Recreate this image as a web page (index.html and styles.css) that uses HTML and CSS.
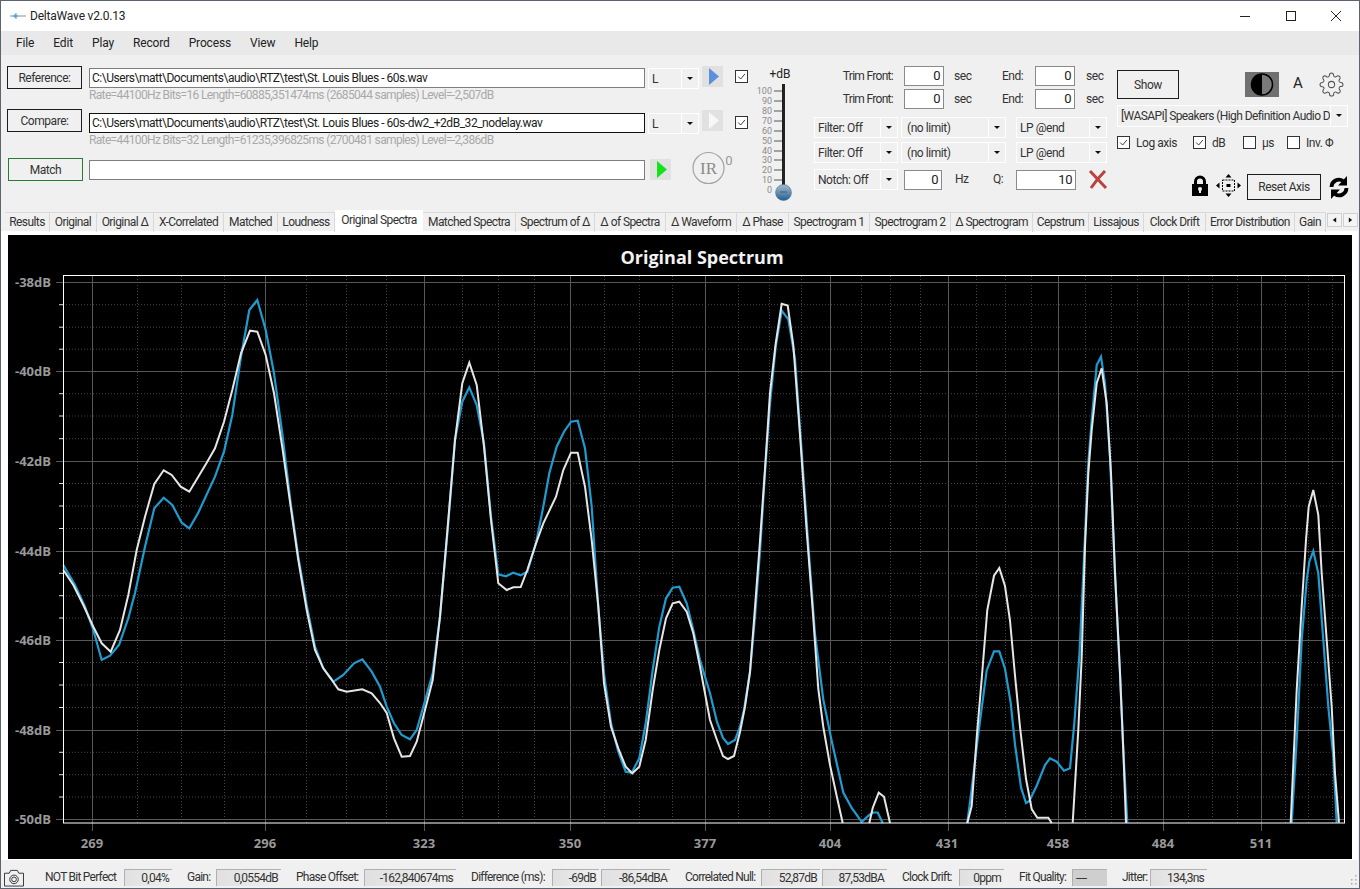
FILE: index.html
```html
<!DOCTYPE html>
<html lang="en">
<head>
<meta charset="utf-8">
<title>DeltaWave v2.0.13</title>
<link rel="stylesheet" href="styles.css">
</head>
<body>
<div class="window">
  <header class="titlebar">
    <svg class="app-icon" viewBox="0 0 16 8"><path class="app-line" d="M0 4H16"/><path class="app-wave" d="M3 4H8M5 2V6M6 1V7"/></svg>
    <span class="app-title">DeltaWave v2.0.13</span>
    <div class="win-buttons">
      <svg viewBox="0 0 10 10"><path d="M0 5.5H10"/></svg>
      <svg viewBox="0 0 10 10"><rect x=".5" y=".5" width="9" height="9"/></svg>
      <svg viewBox="0 0 10 10"><path d="M0 0L10 10M10 0L0 10"/></svg>
    </div>
  </header>
  <nav class="menubar">
    <span>File</span><span>Edit</span><span>Play</span><span>Record</span><span>Process</span><span>View</span><span>Help</span>
  </nav>

  <section class="controls">
    <div class="files">
      <div class="file-row">
        <button class="btn btn-file">Reference:</button>
        <div class="field field-path field-gray">C:\Users\matt\Documents\audio\RTZ\test\St. Louis Blues - 60s.wav</div>
        <div class="combo combo-ch"><span class="combo-text">L</span><span class="combo-arrow"></span></div>
        <div class="play"><svg viewBox="0 0 21 21"><path class="tri-blue" d="M7 2L17 10.5L7 19Z"/></svg></div>
        <span class="chk chk-row1"><svg viewBox="0 0 13 13"><path d="M2.5 6.5L5.5 9.5L10.5 3.5"/></svg></span>
      </div>
      <div class="note">Rate=44100Hz Bits=16 Length=60885,351474ms (2685044 samples) Level=-2,507dB</div>
      <div class="file-row file-row-2">
        <button class="btn btn-file">Compare:</button>
        <div class="field field-path field-dark">C:\Users\matt\Documents\audio\RTZ\test\St. Louis Blues - 60s-dw2_+2dB_32_nodelay.wav</div>
        <div class="combo combo-ch"><span class="combo-text">L</span><span class="combo-arrow"></span></div>
        <div class="play"><svg viewBox="0 0 21 21"><path class="tri-white" d="M7 2L17 10.5L7 19Z"/></svg></div>
        <span class="chk chk-row2"><svg viewBox="0 0 13 13"><path d="M2.5 6.5L5.5 9.5L10.5 3.5"/></svg></span>
      </div>
      <div class="note note-2">Rate=44100Hz Bits=32 Length=61235,396825ms (2700481 samples) Level=-2,386dB</div>
      <div class="file-row file-row-3">
        <button class="btn btn-match">Match</button>
        <div class="field field-match field-gray"></div>
        <div class="play play-match"><svg viewBox="0 0 21 21"><path class="tri-green" d="M7 2L17 10.5L7 19Z"/></svg></div>
        <svg class="ir" viewBox="0 0 42 34"><circle cx="16.5" cy="17" r="15.5"/><text class="ir-text" x="16.5" y="23">IR</text><text class="ir-zero" x="37" y="14">0</text></svg>
      </div>
    </div>

    <svg class="gain" viewBox="757 66 43 136">
      <defs>
        <linearGradient id="knob" x1="0" y1="0" x2="0" y2="1">
          <stop offset="0" stop-color="#a9b9c6"/><stop offset=".45" stop-color="#6f93b3"/><stop offset="1" stop-color="#1f6192"/>
        </linearGradient>
      </defs>
      <text class="gain-title" x="780" y="78">+dB</text>
      <rect class="gain-track" x="782" y="84" width="3" height="106"/>
      <path class="gain-ticks" d="M774 91H782M774 101H782M774 111H782M774 121H782M774 131H782M774 141H782M774 151H782M774 160H782M774 170H782M774 180H782"/>
      <text class="gain-num" x="772" y="94">100</text><text class="gain-num" x="772" y="104">90</text><text class="gain-num" x="772" y="114">80</text><text class="gain-num" x="772" y="124">70</text><text class="gain-num" x="772" y="134">60</text><text class="gain-num" x="772" y="144">50</text><text class="gain-num" x="772" y="154">40</text><text class="gain-num" x="772" y="163">30</text><text class="gain-num" x="772" y="173">20</text><text class="gain-num" x="772" y="183">10</text><text class="gain-num" x="772" y="193">0</text>
      <circle class="gain-knob" cx="783.5" cy="192.5" r="8"/>
      <path class="gain-mark" d="M780 192H787"/>
    </svg>

    <div class="trim">
      <div class="trim-row">
        <span class="t-label">Trim Front:</span><div class="field field-num">0</div><span class="t-unit">sec</span>
        <span class="t-end">End:</span><div class="field field-num">0</div><span class="t-unit t-unit-end">sec</span>
      </div>
      <div class="trim-row trim-row-2">
        <span class="t-label">Trim Front:</span><div class="field field-num">0</div><span class="t-unit">sec</span>
        <span class="t-end">End:</span><div class="field field-num">0</div><span class="t-unit t-unit-end">sec</span>
      </div>
      <div class="filter-row filter-row-1">
        <div class="combo combo-a"><span class="combo-text">Filter: Off</span><span class="combo-arrow"></span></div>
        <div class="combo combo-b"><span class="combo-text">(no limit)</span><span class="combo-arrow"></span></div>
        <div class="combo combo-c"><span class="combo-text">LP @end</span><span class="combo-arrow"></span></div>
      </div>
      <div class="filter-row filter-row-2">
        <div class="combo combo-a"><span class="combo-text">Filter: Off</span><span class="combo-arrow"></span></div>
        <div class="combo combo-b"><span class="combo-text">(no limit)</span><span class="combo-arrow"></span></div>
        <div class="combo combo-c"><span class="combo-text">LP @end</span><span class="combo-arrow"></span></div>
      </div>
      <div class="notch-row">
        <div class="combo combo-a"><span class="combo-text">Notch: Off</span><span class="combo-arrow"></span></div>
        <div class="field field-hz">0</div><span class="n-hz">Hz</span><span class="n-q">Q:</span>
        <div class="field field-q">10</div>
        <svg class="red-x" viewBox="0 0 20 19"><path d="M2 1L18 18M17 1C12 6 7 12 3 18"/></svg>
      </div>
    </div>

    <div class="side">
      <div class="side-top">
        <button class="btn btn-show">Show</button>
        <div class="contrast"><svg viewBox="0 0 34 25"><circle cx="17" cy="12.5" r="10.5"/><path d="M17 2A10.5 10.5 0 0 0 17 23Z"/></svg></div>
        <span class="font-a">A</span>
        <svg class="gear" viewBox="0 0 24 24"><circle cx="12" cy="12" r="3"/><path d="M19.4 15a1.65 1.65 0 0 0 .33 1.82l.06.06a2 2 0 0 1 0 2.83 2 2 0 0 1-2.83 0l-.06-.06a1.65 1.65 0 0 0-1.82-.33 1.65 1.65 0 0 0-1 1.51V21a2 2 0 0 1-2 2 2 2 0 0 1-2-2v-.09A1.65 1.65 0 0 0 9 19.4a1.65 1.65 0 0 0-1.82.33l-.06.06a2 2 0 0 1-2.83 0 2 2 0 0 1 0-2.83l.06-.06a1.65 1.65 0 0 0 .33-1.82 1.65 1.65 0 0 0-1.51-1H3a2 2 0 0 1-2-2 2 2 0 0 1 2-2h.09A1.65 1.65 0 0 0 4.6 9a1.65 1.65 0 0 0-.33-1.82l-.06-.06a2 2 0 0 1 0-2.83 2 2 0 0 1 2.83 0l.06.06a1.65 1.65 0 0 0 1.82.33H9a1.65 1.65 0 0 0 1-1.51V3a2 2 0 0 1 2-2 2 2 0 0 1 2 2v.09a1.65 1.65 0 0 0 1 1.51 1.65 1.65 0 0 0 1.82-.33l.06-.06a2 2 0 0 1 2.83 0 2 2 0 0 1 0 2.83l-.06.06a1.65 1.65 0 0 0-.33 1.82V9a1.65 1.65 0 0 0 1.51 1H21a2 2 0 0 1 2 2 2 2 0 0 1-2 2h-.09a1.65 1.65 0 0 0-1.51 1z"/></svg>
      </div>
      <div class="combo combo-dev"><span class="combo-text">[WASAPI] Speakers (High Definition Audio D</span><span class="combo-arrow"></span></div>
      <div class="checks">
        <span class="chk"><svg viewBox="0 0 13 13"><path d="M2.5 6.5L5.5 9.5L10.5 3.5"/></svg></span><span class="chk-label cl-log">Log axis</span>
        <span class="chk"><svg viewBox="0 0 13 13"><path d="M2.5 6.5L5.5 9.5L10.5 3.5"/></svg></span><span class="chk-label cl-db">dB</span>
        <span class="chk"></span><span class="chk-label cl-us">µs</span>
        <span class="chk"></span><span class="chk-label">Inv. Φ</span>
      </div>
      <div class="side-bottom">
        <svg class="lock" viewBox="0 0 18 21"><path d="M1 9H17V21H1ZM3 9V6.5A6 6 0 0 1 15 6.5V9H12V6.5A3 3 0 0 0 6 6.5V9Z"/><circle class="lock-hole" cx="9" cy="14" r="2"/><rect class="lock-hole" x="8" y="14" width="2" height="4"/></svg>
        <svg class="move" viewBox="0 0 25 23"><path class="move-arrows" d="M12.5 0L15.5 3.5H9.5ZM12.5 23L9.5 19.500H15.500ZM0 11.500L3.500 8.500V14.500ZM25 11.500L21.500 14.500V8.500Z"/><rect class="move-box" x="6.500" y="6" width="12" height="11"/><rect class="move-dot" x="10.500" y="10" width="4" height="3"/></svg>
        <button class="btn btn-reset">Reset Axis</button>
        <svg class="sync" viewBox="0 0 20 23"><path class="sync-arc" d="M2.500 11A7.500 7.500 0 0 1 14 4.800M17.500 12A7.500 7.500 0 0 1 6 18.200"/><path class="sync-head" d="M18 0V9.500H9ZM2 23V13.500H11Z"/></svg>
      </div>
    </div>
  </section>

  <div class="tabs">
    <span class="tab">Results</span><span class="tab">Original</span><span class="tab">Original Δ</span><span class="tab">X-Correlated</span><span class="tab">Matched</span><span class="tab">Loudness</span><span class="tab tab-active">Original Spectra</span><span class="tab">Matched Spectra</span><span class="tab">Spectrum of Δ</span><span class="tab">Δ of Spectra</span><span class="tab">Δ Waveform</span><span class="tab">Δ Phase</span><span class="tab">Spectrogram 1</span><span class="tab">Spectrogram 2</span><span class="tab">Δ Spectrogram</span><span class="tab">Cepstrum</span><span class="tab">Lissajous</span><span class="tab">Clock Drift</span><span class="tab">Error Distribution</span><span class="tab">Gain</span>
    <div class="tab-scroll">
      <span class="scroll-btn"><svg viewBox="0 0 15 14"><path d="M9.500 4V10L5.500 7Z"/></svg></span>
      <span class="scroll-btn"><svg viewBox="0 0 15 14"><path d="M5.500 4V10L9.500 7Z"/></svg></span>
    </div>
  </div>

  <main class="panel">
    <svg class="chart" viewBox="8 235 1344 624">
      <text class="chart-title" x="702" y="264">Original Spectrum</text>
      <path class="grid-minor" d="M63 304.700H1344M63 327.200H1344M63 349.200H1344M63 393.700H1344M63 416H1344M63 438.700H1344M63 483.500H1344M63 506H1344M63 528.500H1344M63 573.300H1344M63 595.700H1344M63 618H1344M63 662.500H1344M63 685H1344M63 707.500H1344M63 752.300H1344M63 774.700H1344M63 797H1344"/>
      <path class="grid-minor" d="M137.500 276V823M181.500 276V823M224.500 276V823M306.500 276V823M346.500 276V823M386.500 276V823M462.500 276V823M498.500 276V823M534.500 276V823M604.500 276V823M639.500 276V823M672.500 276V823M738.500 276V823M769.500 276V823M801.500 276V823M861.500 276V823M890.500 276V823M920.500 276V823M976.500 276V823M1005.500 276V823M1031.500 276V823M1085.500 276V823M1111.500 276V823M1137.500 276V823M1188.500 276V823M1212.500 276V823M1237.500 276V823M1285.500 276V823M1308.500 276V823M1332.500 276V823"/>
      <path class="grid-major" d="M56 282.500H1344M56 371.500H1344M56 461.500H1344M56 551.500H1344M56 640.500H1344M56 730.500H1344M56 819.500H1344M92.500 276V831M265.500 276V831M424.500 276V831M570.500 276V831M705.500 276V831M830.500 276V831M948.500 276V831M1058.500 276V831M1163.500 276V831M1261.500 276V831"/>
      <path class="tick-minor" d="M59 304.700H63M59 327.200H63M59 349.200H63M59 393.700H63M59 416H63M59 438.700H63M59 483.500H63M59 506H63M59 528.500H63M59 573.300H63M59 595.700H63M59 618H63M59 662.500H63M59 685H63M59 707.500H63M59 752.300H63M59 774.700H63M59 797H63"/>
      <polyline class="line-blue" points="63.300,565 75,585 85,606.700 93.300,630 101.700,660 110,655.700 119,645 128.300,618.300 135,593 145,546.700 154.300,508.300 163.700,497.700 172.300,505 181.700,522.700 189.300,528.300 198,513.300 215,476.700 224,451.700 232.300,415 241,356.700 249.300,310 257.300,300 265.700,330 274,373.300 282.700,436.700 290.700,503.300 298.300,556.700 306.700,605 315,646.700 323.300,668.300 333.300,681.700 343.300,675 354,663.300 362.300,659.300 371.700,671.700 380,686.700 386.700,706.700 394,723.300 401.700,735 410,739.300 416.700,730 423.300,706.700 432.700,673.300 440,616.700 447.700,530 455,440 462.300,401.700 469.300,387.300 476.700,405 484,443.300 491,516.700 498.300,574.300 506,576.300 513.300,572.700 520.700,575.300 527.300,571.700 536,543.300 543.300,506.700 549.300,473.300 556.700,446.700 564,431.700 571,421.700 577.700,420.700 585,448.300 591.700,506.700 598.300,606.700 604,673.300 611,723.300 618.300,751.700 625.700,771.700 631.700,772.700 639.300,758.300 645.700,723.300 652.700,670 659.300,626.700 666,598.300 672.700,587.700 679.300,586.700 686.700,603.300 693.300,630 700,660 710,693.300 717,722 723,738 728,744 735,740 740,727 744,710 750,672 755,617 760,551.600 765,472.400 770,403.600 775.700,346.800 781.700,310.700 788.300,319.300 795,358.800 801.700,451.800 808.300,544.700 815,634 823.300,699.600 831.700,741 843.300,792.600 851.700,808 861.700,821.800 869.300,815 873.300,812.500 877.700,812.500 882.700,823"/>
      <polyline class="line-blue" points="967.300,823 971.700,789 978.300,734 986.700,670.400 994,651.400 999.300,651.400 1005,668.700 1010.700,703 1015,744.400 1021,787.400 1026,803 1029.300,801 1036.700,785.700 1045,765 1050,758.300 1056.700,761.700 1064,770.700 1070,768.300 1074.300,723.300 1079.300,656.700 1083.300,573.300 1088.300,463.300 1091.700,420 1096.700,365 1101,356.700 1105,383.300 1110,456.700 1115,573.300 1120,673.300 1123.300,750 1127.300,822.700"/>
      <polyline class="line-blue" points="1291.700,822.700 1296.700,740 1301.700,640 1306.700,580 1309.300,561.700 1313.300,551 1318.300,573.300 1323.300,640 1328.300,706.700 1333.300,756.700 1336.700,822.700"/>
      <polyline class="line-white" points="63.300,570 73.300,585 83.300,605 93.300,626.700 101.700,643.300 110.700,651.700 120,630 128.300,595 136.700,550 145,516.700 154.300,484 163.700,470.300 171.700,475 180.700,486.700 189.300,491.700 198.300,476.700 206.700,462.700 215,448.300 224,421.700 232.300,390 241,353.300 250,330.700 257.300,331.700 265.700,355 274,393.300 282.700,450 290.700,506.700 298.300,560 306.700,610 315,650 323.300,668.300 330.700,678.300 338.300,689.300 346.700,691.700 362.300,689.300 371.700,693.300 380,703 386.700,713 394,738.300 401.700,756.700 410,756 416.700,741.700 425,710 432.700,680 440,616.700 447.700,526.700 455,440 462.300,383.300 469.300,362.700 476.700,385 484,446.700 491,520 498.300,583.300 506.700,590 513.300,587.300 520.700,587 527.300,570 536,543.300 543.300,523.300 556,496.700 563.300,470 571,452.700 577.700,452.700 585,486.700 591.700,540 598.300,606.700 604,683.300 611,726.700 618.300,748.300 625.700,766.700 632.300,773.300 639.300,766.700 645.700,740 652.700,690 659.300,650 666,618.300 672.700,603.300 679.300,601.700 686.700,611.700 693.300,633.300 700,666.700 710,720 717,740 723,756 728,759 734,756 740,732 745,706.500 750,672 754,620.500 760,541 765,469 770,393 775.700,343.400 781.700,303.800 787.700,305.500 793.300,345 800,434.600 806.700,531 812.700,610 818.300,689 823.300,727 830,765 836.700,796 842.700,823"/>
      <polyline class="line-white" points="869.300,823 872.700,808 878.700,792.600 884,796.700 890,823"/>
      <polyline class="line-white" points="967.300,823 971.700,806 976.700,737.500 981.700,679 987.300,610 994,575.700 999.300,568 1005,586 1010,620.500 1015,675.500 1020,727 1026,778.800 1031.700,809 1037.300,817.700 1048.300,817.700 1051.700,823"/>
      <polyline class="line-white" points="1072.700,822.700 1078.300,730 1081.700,656.700 1085,546.700 1088.300,473.300 1091.700,430 1096.700,383.300 1101.700,368.300 1106.700,403.300 1111,473.300 1115,573.300 1120,673.300 1123.300,750 1126,822.700"/>
      <polyline class="line-white" points="1290.700,822.700 1296.700,690 1301.700,606.700 1306,540 1308.700,506.700 1313.300,490 1318.300,515 1321.700,573.300 1326.700,640 1331.700,706.700 1335,773.300 1339,822.700"/>
      <rect class="plot-frame" x="63.500" y="275.500" width="1281" height="547.500"/>
      <text class="y-label" x="51" y="287">-38dB</text><text class="y-label" x="51" y="376">-40dB</text><text class="y-label" x="51" y="466">-42dB</text><text class="y-label" x="51" y="556">-44dB</text><text class="y-label" x="51" y="645">-46dB</text><text class="y-label" x="51" y="735">-48dB</text><text class="y-label" x="51" y="824">-50dB</text>
      <text class="x-label" x="92" y="848">269</text><text class="x-label" x="265" y="848">296</text><text class="x-label" x="424" y="848">323</text><text class="x-label" x="570" y="848">350</text><text class="x-label" x="705" y="848">377</text><text class="x-label" x="830" y="848">404</text><text class="x-label" x="947" y="848">431</text><text class="x-label" x="1058" y="848">458</text><text class="x-label" x="1163" y="848">484</text><text class="x-label" x="1261" y="848">511</text>
    </svg>
  </main>

  <footer class="status">
    <svg class="camera" viewBox="0 0 22 20"><path d="M1 5.500H6L7.500 2.500H14.500L16 5.500H21V19H1Z"/><circle cx="11" cy="12" r="4.500"/><circle cx="11" cy="12" r="2.500"/></svg>
    <span class="s-label s-first">NOT Bit Perfect</span><span class="s-box">0,04%</span>
    <span class="s-label">Gain:</span><span class="s-box">0,0554dB</span>
    <span class="s-label">Phase Offset:</span><span class="s-box">-162,840674ms</span>
    <span class="s-label">Difference (ms):</span><span class="s-box">-69dB</span><span class="s-box s-box-pair">-86,54dBA</span>
    <span class="s-label">Correlated Null:</span><span class="s-box">52,87dB</span><span class="s-box s-box-pair">87,53dBA</span>
    <span class="s-label">Clock Drift:</span><span class="s-box">0ppm</span>
    <span class="s-label">Fit Quality:</span><span class="s-box s-box-dark">----</span>
    <span class="s-label">Jitter:</span><span class="s-box">134,3ns</span>
    <svg class="grip" viewBox="0 0 9 12"><path d="M6 1h1.500v1.500H6zM6 5h1.500v1.500H6zM2 5h1.500v1.500H2zM6 9h1.500v1.500H6zM2 9h1.500v1.500H2z"/></svg>
  </footer>
</div>
</body>
</html>
```
FILE: styles.css
```css
* { box-sizing: border-box; }
html, body { margin: 0; padding: 0; }
body { width: 1360px; height: 889px; overflow: hidden; background: #f0f0f0; font-family: Roboto, "Open Sans", sans-serif; font-size: 12px; letter-spacing: -.45px; color: #333; }
button { font: inherit; letter-spacing: inherit; color: inherit; padding: 0; }
svg { display: block; flex: none; letter-spacing: 0; }

.window { width: 1360px; height: 889px; border: 1px solid #5c6470; background: #f0f0f0; display: flex; flex-direction: column; overflow: hidden; }

.titlebar { height: 30px; background: #fff; display: flex; align-items: center; flex: none; padding-left: 9px; }
.app-icon { width: 16px; height: 8px; }
.app-line { stroke: #8a8f96; stroke-width: 1; fill: none; }
.app-wave { stroke: #3f9ee0; stroke-width: 1; fill: none; }
.app-title { margin-left: 4px; font-size: 12px; letter-spacing: -.2px; color: #222; }
.win-buttons { margin-left: auto; display: flex; gap: 35.5px; padding-right: 18px; }
.win-buttons svg { width: 10px; height: 10px; fill: none; stroke: #222; stroke-width: 1; overflow: visible; }

.menubar { height: 24px; flex: none; background: #e9e9e9; display: flex; align-items: center; gap: 19px; padding-left: 15px; font-size: 12px; letter-spacing: -.15px; color: #222; }

.controls { height: 156px; flex: none; display: flex; }
.files { width: 756px; padding: 11px 0 0 6px; flex: none; }
.file-row { display: flex; align-items: flex-start; height: 23px; }
.file-row-2 { margin-top: 7px; }
.file-row-3 { margin-top: 11px; padding-left: 1px; }

.btn { background: #f0f0f0; border: 1px solid #1c1c1c; display: block; text-align: center; flex: none; }
.btn-file { width: 75px; height: 23px; }
.btn-match { width: 75px; height: 23px; border-color: #2b7a3b; }
.btn-show { width: 62px; height: 29px; }
.btn-reset { width: 74px; height: 26px; }

.field { background: #fff; border: 1px solid #8a8a8a; flex: none; height: 20px; line-height: 18px; color: #222; white-space: nowrap; overflow: hidden; }
.field-gray { border-color: #7e7e7e; }
.field-dark { border-color: #111; }
.field-path { width: 556px; margin: 2px 0 0 7px; padding-left: 2px; font-size: 12px; letter-spacing: -.47px; }
.file-row-2 .field-path { margin-top: 4px; }
.field-match { width: 556px; margin: 2px 0 0 6px; }
.field-num { width: 40px; text-align: right; padding-right: 3px; font-size: 13px; }
.field-hz { width: 38px; margin: 1px 0 0 6px; text-align: right; padding-right: 3px; font-size: 13px; }
.field-q { width: 60px; margin-top: 1px; text-align: right; padding-right: 3px; font-size: 13px; }

.note { margin-left: 82px; height: 13px; line-height: 13px; color: #a9a9a9; font-size: 12px; letter-spacing: -.65px; white-space: nowrap; }
.note-2 { margin-top: 2px; }

.combo { display: flex; border: 1px solid #fff; height: 21px; flex: none; background: #f0f0f0; }
.combo-text { flex: 1; padding-left: 3px; line-height: 20px; white-space: nowrap; overflow: hidden; }
.combo-arrow { width: 17px; flex: none; border-left: 1px solid #fff; position: relative; }
.combo-arrow::after { content: ""; position: absolute; left: 5px; top: 8px; border: 3px solid transparent; border-top: 3px solid #111; border-bottom: 0; }
.combo-ch { width: 51px; margin: 2px 0 0 3px; }
.file-row-2 .combo-ch { margin-top: 4px; }
.combo-a { width: 84px; }
.combo-b { width: 105px; margin-left: 3px; }
.combo-b .combo-text { padding-left: 5px; }
.combo-c { width: 91px; margin-left: 10px; }
.combo-dev { width: 231px; height: 22px; margin-top: 6px; letter-spacing: -.58px; }
.combo-dev .combo-arrow { width: 17px; }

.play { width: 21px; height: 21px; background: #e1e1e1; margin-left: 3px; flex: none; }
.play svg { width: 21px; height: 21px; }
.file-row-2 .play { margin-top: 1px; }
.play-match { margin: 1px 0 0 5px; }
.tri-blue { fill: #5c8fdc; }
.tri-white { fill: #f7f7f7; }
.tri-green { fill: #16e21c; }

.chk { width: 13px; height: 13px; border: 1px solid #333; background: #fff; flex: none; display: block; }
.chk svg { width: 11px; height: 11px; fill: none; stroke: #333; stroke-width: 1.1; }
.chk-row1 { margin: 4px 0 0 12px; }
.chk-row2 { margin: 7px 0 0 12px; }

.ir { width: 42px; height: 34px; margin: -7px 0 0 21px; fill: none; stroke: none; }
.ir circle { stroke: #a3a3a3; stroke-width: 1.2; }
.ir-text { font-family: "Liberation Serif", serif; font-size: 17px; fill: #8a8a8a; text-anchor: middle; }
.ir-zero { font-family: Roboto, sans-serif; font-size: 13px; fill: #999; text-anchor: middle; }

.gain { width: 43px; height: 136px; margin-top: 11px; flex: none; }
.gain-title { font-size: 12px; fill: #222; text-anchor: middle; }
.gain-track { fill: #222; }
.gain-ticks { stroke: #555; stroke-width: 1; fill: none; }
.gain-num { font-size: 9px; fill: #8c8c8c; text-anchor: end; }
.gain-knob { fill: url(#knob); stroke: #3a6f97; stroke-width: .5; }
.gain-mark { stroke: #3c5f78; stroke-width: 1; }

.trim { width: 296px; margin-left: 14px; padding-top: 11px; flex: none; }
.trim-row { display: flex; height: 20px; line-height: 20px; }
.trim-row-2 { margin-top: 3px; }
.t-label { width: 79px; margin-right: 11px; text-align: right; flex: none; white-space: nowrap; letter-spacing: -.7px; }
.t-unit { width: 58px; padding-left: 10px; flex: none; }
.t-unit-end { width: 30px; padding-left: 11px; }
.t-end { width: 33px; flex: none; }
.filter-row { display: flex; }
.filter-row-1 { margin-top: 8px; }
.filter-row-2 { margin-top: 4px; }
.notch-row { display: flex; margin-top: 6px; line-height: 21px; }
.n-hz { width: 38px; margin-left: 13px; flex: none; }
.n-q { width: 23px; flex: none; }
.red-x { width: 20px; height: 19px; margin: 1px 0 0 12px; fill: none; stroke: #b9423f; stroke-width: 3; }

.side { width: 233px; margin-left: 7px; padding-top: 15px; flex: none; }
.side-top { display: flex; align-items: flex-start; height: 29px; }
.contrast { width: 34px; height: 25px; margin: 2px 0 0 66px; background: #707070; }
.contrast svg { width: 34px; height: 25px; fill: #000; }
.contrast circle { fill: #7a7a7a; stroke: #000; stroke-width: 1.5; }
.font-a { font-size: 15px; letter-spacing: 0; color: #222; margin: 4px 0 0 14px; width: 26px; }
.gear { width: 25px; height: 25px; margin-top: 2px; fill: none; stroke: #555; stroke-width: 1; }
.checks { display: flex; align-items: center; margin-top: 9px; height: 13px; }
.chk-label { white-space: nowrap; margin-left: 6px; }
.cl-log { width: 57px; }
.cl-db { width: 31px; }
.cl-us { width: 25px; }
.side-bottom { display: flex; align-items: flex-start; margin-top: 25px; padding-left: 74px; }
.lock { width: 18px; height: 21px; margin-top: 1px; fill: #000; }
.lock-hole { fill: #f0f0f0; }
.move { width: 25px; height: 23px; margin-left: 7px; }
.move-arrows { fill: #000; }
.move-box { fill: none; stroke: #000; stroke-width: 1; stroke-dasharray: 2 1; }
.move-dot { fill: #000; }
.btn-reset { margin-left: 6px; }
.sync { width: 20px; height: 23px; margin: 2px 0 0 8px; }
.sync-arc { fill: none; stroke: #000; stroke-width: 3.8; }
.sync-head { fill: #000; }

.tabs { height: 20px; flex: none; position: relative; display: grid; padding-left: 4px; letter-spacing: -.58px; grid-template-columns: 45px 47px 57px 70px 54px 57px 88px 93px 79px 71px 71px 52px 81px 81px 82px 56px 55px 62px 89px 31px; }
.tab { text-align: center; white-space: nowrap; line-height: 18px; border: 1px solid #d9d9d9; border-left: 0; border-bottom: 0; height: 20px; margin-top: 1px; color: #333; overflow: hidden; }
.tab-active { background: #fff; height: 22px; margin-top: -1px; line-height: 20px; border: 0; position: relative; z-index: 1; }
.tab-scroll { position: absolute; right: 1px; top: 2px; display: flex; gap: 1px; }
.scroll-btn { width: 15px; height: 14px; border: 1px solid #d0d0d0; background: #f4f4f4; }
.scroll-btn svg { width: 13px; height: 12px; fill: #111; }

.panel { height: 629px; flex: none; background: #fff; margin: 0 1px 0 0; padding: 4px 6px 0 7px; }
.chart { width: 1344px; height: 624px; background: #000; }
.chart-title { font-family: "Open Sans", sans-serif; font-weight: 700; font-size: 18px; fill: #f2f2f2; text-anchor: middle; }
.grid-minor { stroke: #444; stroke-width: 1; stroke-dasharray: 1 2; fill: none; }
.grid-major { stroke: #585858; stroke-width: 1; fill: none; }
.tick-minor { stroke: #ddd; stroke-width: 1; fill: none; }
.line-blue { fill: none; stroke: #1f9bcf; stroke-width: 2.2; }
.line-white { fill: none; stroke: #e6e6e6; stroke-width: 2; }
.plot-frame { fill: none; stroke: #fff; stroke-width: 1; }
.y-label { font-family: "Open Sans", sans-serif; font-weight: 700; font-size: 13px; fill: #999; text-anchor: end; }
.x-label { font-family: "Open Sans", sans-serif; font-weight: 700; font-size: 13px; fill: #999; text-anchor: middle; }

.status { height: 28px; flex: none; display: grid; align-items: start; padding-top: 9px; letter-spacing: -.75px; grid-template-columns: 44px 79px 48px 44px 65px 83px 92px 96px 47px 71px 91px 59px 67px 72px 45px 68px 35px 43px 57px; position: relative; }
.camera { position: absolute; left: 2px; top: 8px; width: 22px; height: 19px; fill: none; stroke: #333; stroke-width: 1; }
.grip { position: absolute; right: 1px; top: 14px; width: 9px; height: 12px; fill: #aaa; }
.s-label { padding-left: 15px; line-height: 17px; white-space: nowrap; }
.s-first { grid-column: 2; padding-left: 0; }
.s-box { height: 17px; line-height: 16px; text-align: right; padding-right: 3px; background: linear-gradient(90deg, #e0e0e0, #f0f0f0); border-left: 1px solid #b0b0b0; border-top: 1px solid #b0b0b0; white-space: nowrap; overflow: hidden; }
.s-box-pair { margin-left: 2px; }
.s-box-dark { background: #cfcfcf; text-align: left; padding-left: 3px; }
```
